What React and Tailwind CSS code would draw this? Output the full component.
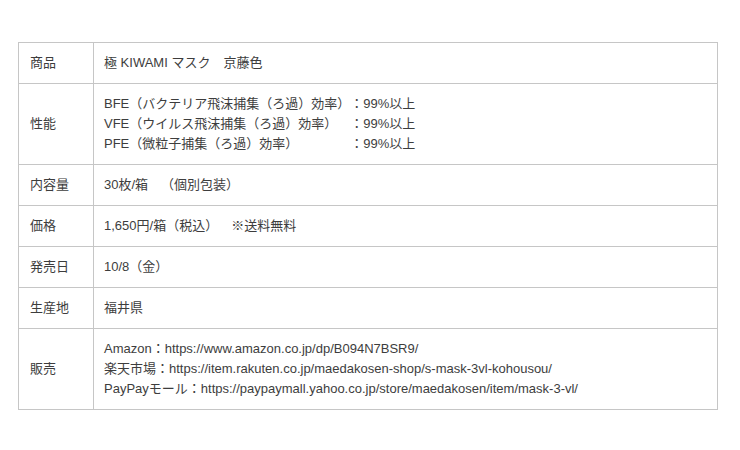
const ROWS = [
  { label: '商品', lines: ['極 KIWAMI マスク　京藤色'] },
  {
    label: '性能',
    spec: [
      ['BFE（バクテリア飛沫捕集（ろ過）効率）', '：99%以上'],
      ['VFE（ウイルス飛沫捕集（ろ過）効率）', '：99%以上'],
      ['PFE（微粒子捕集（ろ過）効率）', '：99%以上'],
    ],
  },
  { label: '内容量', lines: ['30枚/箱　（個別包装）'] },
  { label: '価格', lines: ['1,650円/箱（税込）　※送料無料'] },
  { label: '発売日', lines: ['10/8（金）'] },
  { label: '生産地', lines: ['福井県'] },
  {
    label: '販売',
    lines: [
      'Amazon：https://www.amazon.co.jp/dp/B094N7BSR9/',
      '楽天市場：https://item.rakuten.co.jp/maedakosen-shop/s-mask-3vl-kohousou/',
      'PayPayモール：https://paypaymall.yahoo.co.jp/store/maedakosen/item/mask-3-vl/',
    ],
  },
]

export default function App() {
  return (
    <div className="w-[740px] h-[450px] bg-white pt-[42px] pl-[18px] font-['Liberation_Sans','Noto_Sans_CJK_JP',sans-serif] text-[13px] leading-[20px] text-[#3d3d3d] [text-spacing-trim:space-all]">
      <table className="w-[700px] border-collapse border border-[#c6c6c6]">
        <tbody>
          {ROWS.map(row => (
            <tr key={row.label} className="border-b border-[#c6c6c6]">
              <td className="w-[75px] border-r border-[#c6c6c6] pl-[11px] py-[10px] align-middle">{row.label}</td>
              <td className="pl-[10px] py-[10px] align-middle">
                {row.spec ? (
                  <div className="grid grid-cols-[max-content_1fr]">
                    {row.spec.map(([k, v]) => (
                      <div key={k} className="contents">
                        <span>{k}</span>
                        <span>{v}</span>
                      </div>
                    ))}
                  </div>
                ) : (
                  row.lines.map(l => <div key={l}>{l}</div>)
                )}
              </td>
            </tr>
          ))}
        </tbody>
      </table>
    </div>
  )
}
